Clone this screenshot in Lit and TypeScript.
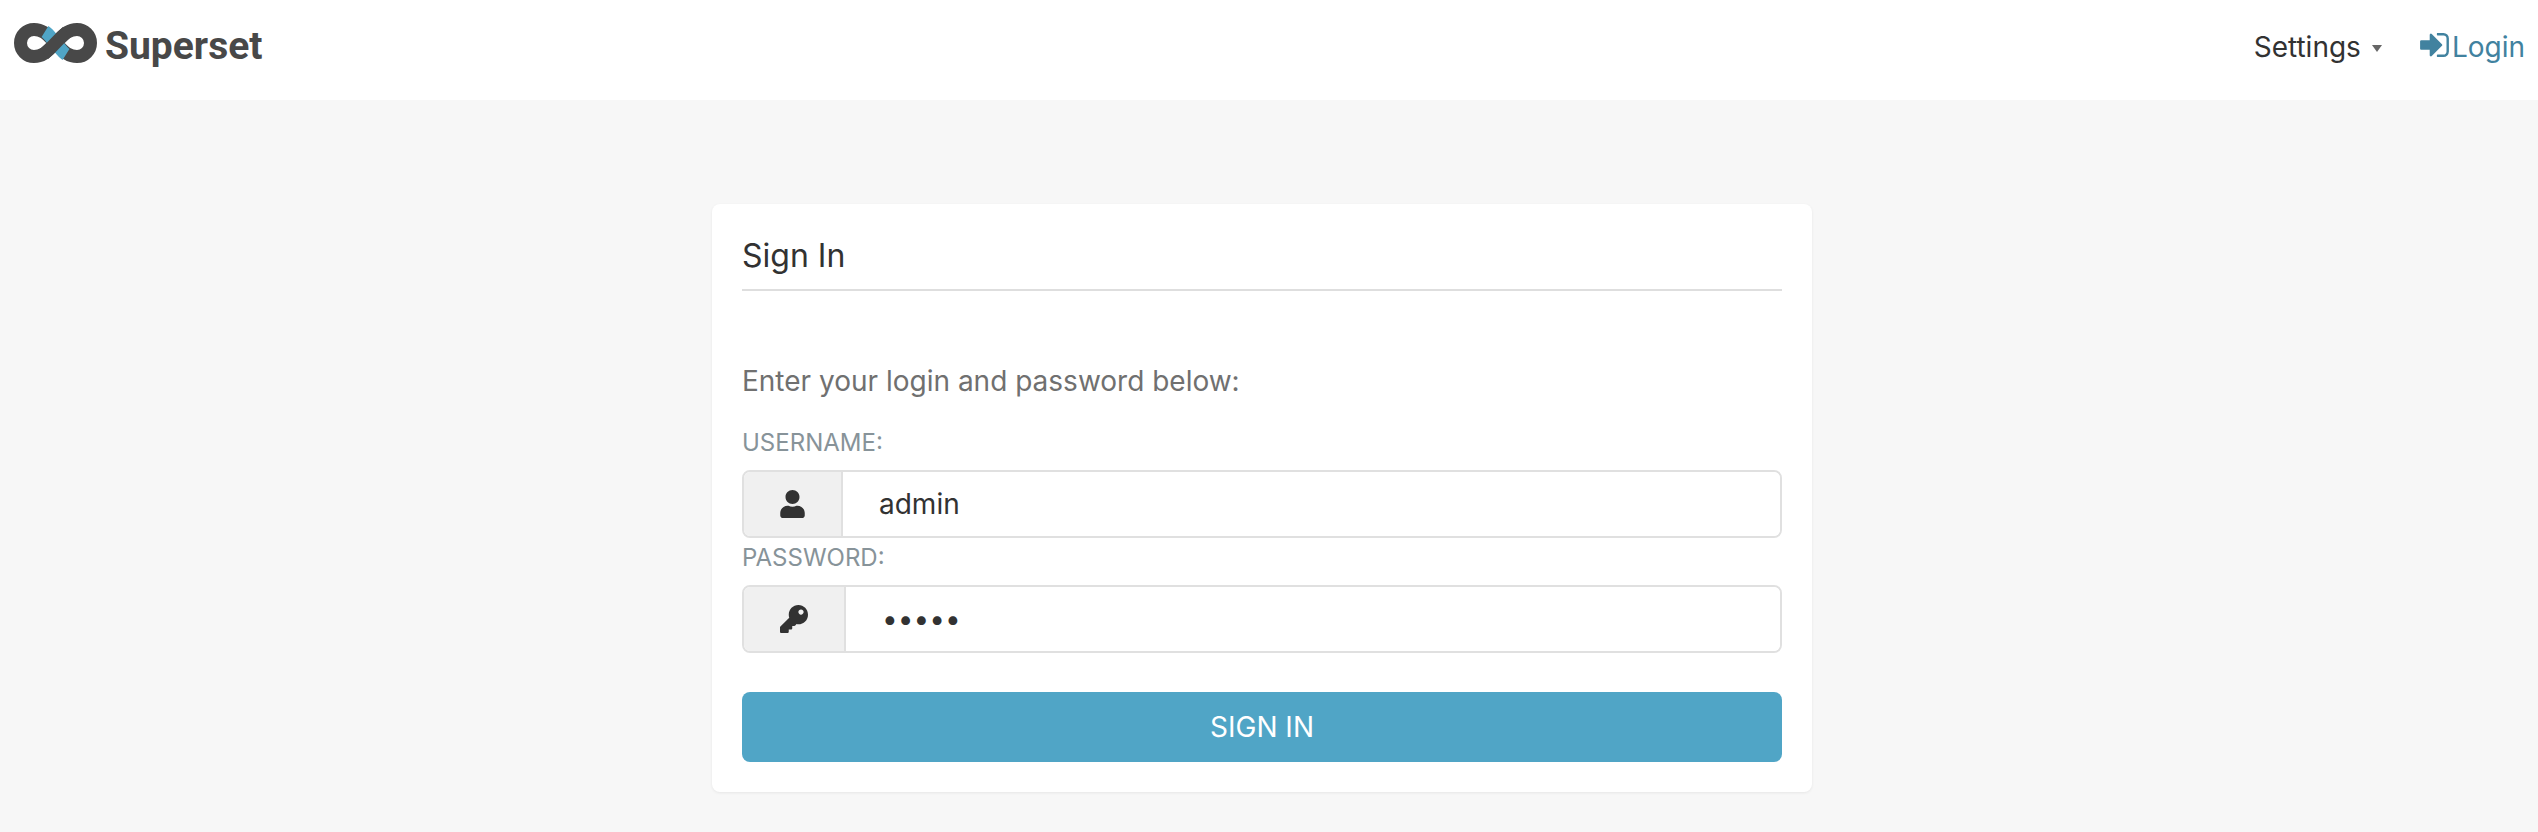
import { LitElement, html, css } from "lit";
import { customElement } from "lit/decorators.js";

@customElement("app-root")
export class AppRoot extends LitElement {
  static styles = css`
    :host {
      display: block;
      min-height: 832px;
      background: #f7f7f7;
      font-family: Inter, "Liberation Sans", sans-serif;
      color: #323232;
    }
    .header {
      height: 100px;
      box-sizing: border-box;
      background: #fff;
      display: flex;
      align-items: center;
      justify-content: space-between;
      padding: 0 13px 0 14px;
    }
    .brand {
      display: flex;
      align-items: center;
      gap: 8px;
      padding-bottom: 14px;
    }
    .brand-mark {
      width: 83px;
      height: 40px;
      display: block;
    }
    .brand-name {
      font-family: Roboto, sans-serif;
      font-weight: 700;
      font-size: 39px;
      line-height: 44px;
      padding-top: 6px;
      color: #484848;
    }
    .nav {
      display: flex;
      align-items: center;
      font-size: 28px;
      line-height: 40px;
      padding-bottom: 6px;
    }
    .settings {
      color: #323232;
    }
    .caret {
      width: 0;
      height: 0;
      margin-left: 11px;
      margin-right: 38px;
      margin-top: 2px;
      border-left: 5px solid transparent;
      border-right: 5px solid transparent;
      border-top: 7px solid #666;
    }
    .login {
      display: flex;
      align-items: center;
      gap: 3px;
      color: #41829f;
    }
    .login svg {
      width: 29px;
      height: 24px;
      margin-top: -4px;
      display: block;
      fill: currentColor;
    }
    .main {
      display: flex;
      justify-content: center;
      padding: 104px 14px 0 0;
    }
    .card {
      width: 1100px;
      height: 588px;
      box-sizing: border-box;
      padding: 30px;
      background: #fff;
      border-radius: 8px;
      box-shadow: 0 1px 3px rgba(0, 0, 0, 0.07);
    }
    .title {
      height: 55px;
      border-bottom: 2px solid #dedede;
      font-size: 32px;
      line-height: 44px;
    }
    .intro {
      margin-top: 70px;
      font-size: 28px;
      line-height: 40px;
      color: #707070;
    }
    .label {
      margin-bottom: 7px;
      font-size: 24px;
      line-height: 40px;
      color: #879399;
    }
    .intro + .label {
      margin-top: 22px;
    }
    .group {
      display: flex;
      height: 68px;
      box-sizing: border-box;
      border: 2px solid #e0e0e0;
      border-radius: 8px;
      overflow: hidden;
    }
    .addon {
      display: flex;
      align-items: center;
      padding: 0 36px;
      background: #f0f0f0;
      border-right: 2px solid #e0e0e0;
    }
    .addon svg {
      height: 28px;
      display: block;
      fill: #323232;
    }
    .icon-user {
      width: 25px;
    }
    .icon-key {
      width: 28px;
    }
    input {
      flex: 1;
      min-width: 0;
      border: 0;
      outline: 0;
      padding: 0 36px;
      background: #fff;
      font: inherit;
      font-size: 28px;
      color: #323232;
    }
    .submit {
      display: block;
      width: 100%;
      height: 70px;
      margin-top: 39px;
      border: 0;
      border-radius: 8px;
      background: #50a5c6;
      color: #fff;
      font: inherit;
      font-size: 28px;
    }
  `;

  render() {
    return html`
      <header class="header">
        <div class="brand">
          <svg class="brand-mark" viewBox="0 0 83 40" aria-hidden="true">
            <g fill="none" stroke-width="13">
              <path stroke="#484848" d="M20 6.5 C30 6.5 34 13 41.5 20 C49 27 53 33.5 63 33.5 A13.5 13.5 0 0 0 63 6.5 C53 6.5 49 13 41.5 20 C34 27 30 33.5 20 33.5 A13.5 13.5 0 0 1 20 6.5Z" />
              <path stroke="#50a5c6" d="M31 8.5 C35 11 38 16.3 41.5 20 C45 23.7 48 29 52 31.5" />
              <path stroke="#484848" d="M30 31 C35 27 37 25 41.5 20 C46 15 48 13 53 9" />
            </g>
          </svg>
          <span class="brand-name">Superset</span>
        </div>
        <nav class="nav">
          <span class="settings">Settings</span>
          <span class="caret"></span>
          <span class="login">
            <svg viewBox="0 256 1536 1280" aria-hidden="true">
              <path d="M1184 896q0 26-19 45l-544 544q-19 19-45 19t-45-19-19-45v-288h-448q-26 0-45-19t-19-45v-384q0-26 19-45t45-19h448v-288q0-26 19-45t45-19 45 19l544 544q19 19 19 45zm352-352v704q0 119-84.5 203.5t-203.5 84.5h-320q-13 0-22.5-9.5t-9.5-22.5q0-4-1-20t-.5-26.5 3-23.5 10-19.5 20.5-6.5h320q66 0 113-47t47-113v-704q0-66-47-113t-113-47h-312l-11.5-1-11.5-3-8-5.5-7-9-2-13.5q0-4-1-20t-.5-26.5 3-23.5 10-19.5 20.5-6.5h320q119 0 203.5 84.5t84.5 203.5z" />
            </svg>
            Login
          </span>
        </nav>
      </header>
      <main class="main">
        <section class="card">
          <div class="title">Sign In</div>
          <div class="intro">Enter your login and password below:</div>
          <div class="label">USERNAME:</div>
          <div class="group">
            <span class="addon">
              <svg class="icon-user" viewBox="0 0 448 512" aria-hidden="true">
                <path d="M224 256c70.7 0 128-57.3 128-128S294.7 0 224 0 96 57.3 96 128s57.3 128 128 128zm89.6 32h-16.7c-22.2 10.2-46.9 16-72.9 16s-50.6-5.8-72.9-16h-16.7C60.2 288 0 348.2 0 422.4V464c0 26.5 21.5 48 48 48h352c26.5 0 48-21.5 48-48v-41.6c0-74.2-60.2-134.4-134.4-134.4z" />
              </svg>
            </span>
            <input type="text" value="admin" />
          </div>
          <div class="label">PASSWORD:</div>
          <div class="group">
            <span class="addon">
              <svg class="icon-key" viewBox="0 0 512 512" aria-hidden="true">
                <path d="M512 176.001C512 273.203 433.202 352 336 352c-11.22 0-22.19-1.062-32.827-3.069l-24.012 27.014A23.999 23.999 0 0 1 261.223 384H224v40c0 13.255-10.745 24-24 24h-40v40c0 13.255-10.745 24-24 24H24c-13.255 0-24-10.745-24-24v-78.059c0-6.365 2.529-12.47 7.029-16.971l161.802-161.802C163.108 213.814 160 195.271 160 176 160 78.798 238.797.001 335.999 0 433.488-.001 512 78.511 512 176.001zM336 128c0 26.51 21.49 48 48 48s48-21.49 48-48-21.49-48-48-48-48 21.49-48 48z" />
              </svg>
            </span>
            <input type="password" value="admin" />
          </div>
          <button class="submit" type="button">SIGN IN</button>
        </section>
      </main>
    `;
  }
}
